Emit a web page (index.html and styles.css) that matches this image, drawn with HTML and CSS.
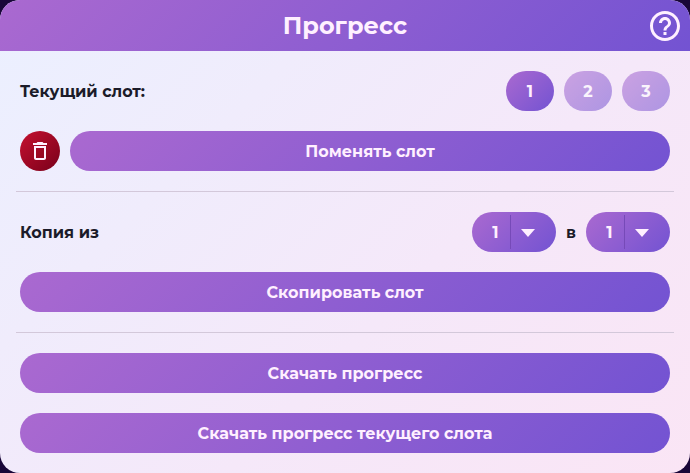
FILE: index.html
```html
<!DOCTYPE html>
<html lang="ru">
<head>
<meta charset="utf-8">
<title>Прогресс</title>
<link rel="stylesheet" href="styles.css">
</head>
<body>
<main class="dialog">
  <header class="header">
    <h1 class="title">Прогресс</h1>
    <button class="help" aria-label="Помощь">
      <svg width="36" height="36" viewBox="0 0 24 24" fill="currentColor"><path d="M11 18h2v-2h-2v2zm1-16C6.480 2 2 6.480 2 12s4.480 10 10 10 10-4.480 10-10S17.520 2 12 2zm0 18c-4.410 0-8-3.590-8-8s3.590-8 8-8 8 3.590 8 8-3.590 8-8 8zm0-14c-2.210 0-4 1.790-4 4h2c0-1.100.9-2 2-2s2 .9 2 2c0 2-3 1.750-3 5h2c0-2.250 3-2.500 3-5 0-2.210-1.790-4-4-4z"/></svg>
    </button>
  </header>
  <div class="content">
    <section class="row">
      <span class="label">Текущий слот:</span>
      <div class="group">
        <button class="slot">1</button>
        <button class="slot inactive">2</button>
        <button class="slot inactive">3</button>
      </div>
    </section>
    <section class="row">
      <button class="delete" aria-label="Удалить">
        <svg width="24" height="24" viewBox="0 0 24 24" fill="currentColor"><path d="M6 19c0 1.100.9 2 2 2h8c1.100 0 2-.9 2-2V7H6v12zM8 9h8v10H8V9zm7.500-5-1-1h-5l-1 1H5v2h14V4z"/></svg>
      </button>
      <button class="action">Поменять слот</button>
    </section>
    <hr class="divider">
    <section class="row">
      <span class="label">Копия из</span>
      <div class="group">
        <button class="select"><span class="value">1</span><span class="arrow"><svg width="14" height="8" viewBox="0 0 14 8"><path d="M0 0h14L7 8z" fill="currentColor"/></svg></span></button>
        <span class="label label-to">в</span>
        <button class="select"><span class="value">1</span><span class="arrow"><svg width="14" height="8" viewBox="0 0 14 8"><path d="M0 0h14L7 8z" fill="currentColor"/></svg></span></button>
      </div>
    </section>
    <button class="action">Скопировать слот</button>
    <hr class="divider">
    <button class="action">Скачать прогресс</button>
    <button class="action">Скачать прогресс текущего слота</button>
  </div>
</main>
</body>
</html>
```
FILE: styles.css
```css
* { box-sizing: border-box; }
body {
  margin: 0;
  background: #190638;
  font: 700 16px/20px Montserrat, Inter, "Open Sans", sans-serif;
  color: #1b1b29;
}
button {
  border: 0;
  padding: 0;
  font: inherit;
  color: #fff0ff;
  display: flex;
  align-items: center;
  justify-content: center;
}
svg { display: block; }
.dialog {
  height: 473px;
  border-radius: 20px;
  overflow: hidden;
  background: linear-gradient(135deg, #ebf0ff, #f5e8f9 60%, #fae5f5);
}
.header {
  height: 51px;
  display: grid;
  grid-template-columns: 50px 1fr 50px;
  align-items: center;
  background: linear-gradient(135deg, #aa69d0, #7353d2);
  color: #fff0ff;
}
.title {
  grid-column: 2;
  margin: 0;
  text-align: center;
  font-size: 24px;
  line-height: 30px;
}
.help { background: none; }
.content {
  padding: 20px;
  display: flex;
  flex-direction: column;
  gap: 20px;
}
.row {
  height: 40px;
  display: flex;
  align-items: center;
  justify-content: space-between;
  gap: 10px;
}
.group { display: flex; align-items: center; gap: 10px; }
.label, .value { padding-top: 2px; }
.slot, .action, .select {
  height: 40px;
  border-radius: 20px;
  background: linear-gradient(135deg, #aa69d0, #7353d2);
}
.slot, .action { padding-top: 2px; }
.slot { width: 48px; }
.inactive { opacity: .55; color: #fff; }
.action { flex: 1 0 40px; }
.delete {
  width: 40px;
  height: 40px;
  border-radius: 50%;
  background: linear-gradient(135deg, #c5102f, #78001a);
}
.divider {
  width: calc(100% + 8px);
  height: 1px;
  margin: 0 -4px;
  border: 0;
  background: #d3c8da;
}
.select { width: 84px; justify-content: flex-start; }
.value { width: 38px; padding-left: 9px; text-align: center; }
.arrow {
  width: 36px;
  height: 34px;
  border-left: 1px solid #764ab8;
  display: flex;
  align-items: center;
  justify-content: center;
}
.arrow svg { margin: 1px 1px 0 0; }
.label-to { width: 10px; text-align: center; }
```
